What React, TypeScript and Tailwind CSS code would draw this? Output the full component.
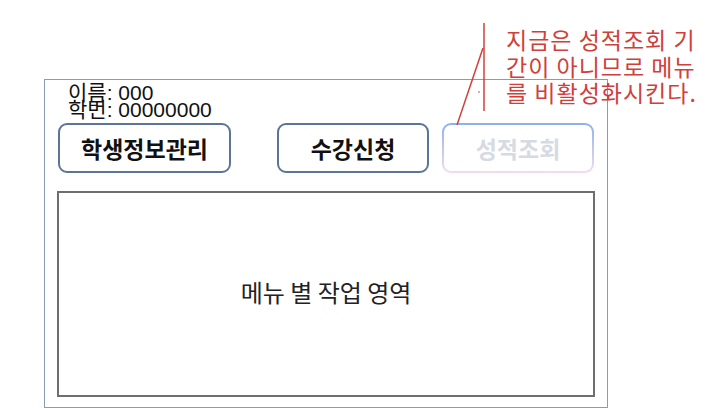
import React from "react"

const KR = "font-['Noto_Sans_CJK_KR',sans-serif]"

function MenuButton({ label, className = "" }: { label: string; className?: string }) {
  return (
    <button
      className={`h-[50px] rounded-[9px] border-2 border-[#5d7595] bg-white text-[23px] font-bold text-[#111] ${KR} ${className}`}
    >
      {label}
    </button>
  )
}

export default function App() {
  return (
    <div className="relative h-[412px] w-[706px] overflow-hidden bg-white">
      {/* 메인 화면 프레임 */}
      <div className="ml-[44px] mt-[79px] flex h-[329px] w-[564px] flex-col border border-[#8b9bb3] px-[12px] pb-[10px]">
        <div className="pl-[11px] pt-[3px] text-[#111] font-['Liberation_Sans','Noto_Sans_CJK_KR',sans-serif] leading-[17px]">
          <div className="h-[17px] text-[21px]">
            <span className={`text-[21px] ${KR}`}>이름</span>: 000
          </div>
          <div className="h-[19px] text-[21px]">
            <span className={`text-[21px] ${KR}`}>학번</span>: 00000000
          </div>
        </div>

        <div className="mt-[4px] flex items-center">
          <MenuButton label="학생정보관리" className="ml-[1px] w-[173px]" />
          <MenuButton label="수강신청" className="ml-[46px] w-[152px]" />
          <div className="ml-[13px] w-[152px] rounded-[9px] bg-gradient-to-b from-[#8db0ec] to-[#f4dcee] p-[2px]">
            <div className={`flex h-[46px] items-center justify-center rounded-[7px] bg-white text-[23px] font-bold text-[#d6dae3] ${KR}`}>
              성적조회
            </div>
          </div>
        </div>

        <div className="mt-[18px] flex flex-1 items-center justify-center border-2 border-[#6e6e6e] pb-[4px]">
          <span className={`text-[24px] text-[#222] ${KR}`}>메뉴 별 작업 영역</span>
        </div>
      </div>

      {/* 설명 주석 */}
      <div className={`absolute left-[506px] top-[26px] text-[23px] leading-[26.5px] tracking-[1px] text-[#d0403a] ${KR}`}>
        <div>지금은 성적조회 기</div>
        <div>간이 아니므로 메뉴</div>
        <div>를 비활성화시킨다.</div>
      </div>
      <svg className="absolute left-0 top-0" width="706" height="412">
        <line x1="484" y1="23" x2="484" y2="111" stroke="#d0403a" strokeWidth="1.5" />
        <line x1="483" y1="48" x2="457" y2="125" stroke="#d0403a" strokeWidth="1.5" />
        <circle cx="479" cy="92" r="0.8" fill="#d0403a" />
      </svg>
    </div>
  )
}
